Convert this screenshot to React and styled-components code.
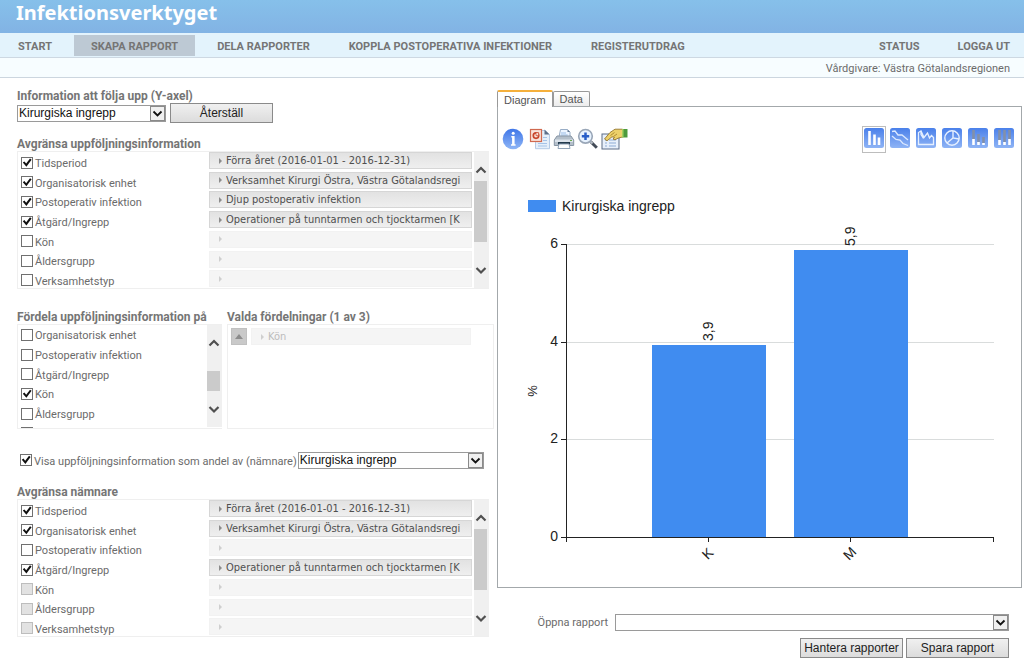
// src/App.jsx
import React, { useState } from "react";
import styled, { createGlobalStyle } from "styled-components";

const dimensions = [
  "Tidsperiod",
  "Organisatorisk enhet",
  "Postoperativ infektion",
  "Åtgärd/Ingrepp",
  "Kön",
  "Åldersgrupp",
  "Verksamhetstyp",
];

const period = "Förra året (2016-01-01 - 2016-12-31)";
const unit = "Verksamhet Kirurgi Östra, Västra Götalandsregi";
const surgery = "Operationer på tunntarmen och tjocktarmen [K";

const followUpValues = [period, unit, "Djup postoperativ infektion", surgery, "", "", ""];
const denominatorValues = [period, unit, "", surgery, "", "", ""];

const bars = [
  { name: "K", value: 3.93, label: "3,9" },
  { name: "M", value: 5.88, label: "5,9" },
];

function Select({ id, label, options }) {
  return (
    <SelectBox>
      <select id={id} aria-label={label}>
        {options.map((option) => (
          <option key={option}>{option}</option>
        ))}
      </select>
      <SelectArrow viewBox="0 0 15 15" aria-hidden="true">
        <rect x="0.5" y="0.5" width="14" height="14" fill="#f0f0f0" stroke="#8a8a8a" />
        <path d="M3.5 5.5 L7.5 9.5 L11.5 5.5" fill="none" stroke="#111" strokeWidth="1.8" />
      </SelectArrow>
    </SelectBox>
  );
}

function Check({ id, label, checked, disabled }) {
  return (
    <CheckRow>
      <Checkbox id={id} type="checkbox" defaultChecked={checked} disabled={disabled} />
      <label htmlFor={id}>{label}</label>
    </CheckRow>
  );
}

function Scroll({ offset, size }) {
  return (
    <ScrollBar aria-hidden="true">
      <svg viewBox="0 0 15 20">
        <path d="M2.5 12.5 L7 8 L11.5 12.5" />
      </svg>
      <ScrollTrack>
        <ScrollThumb style={{ marginTop: offset, height: size }} />
      </ScrollTrack>
      <svg viewBox="0 0 15 20">
        <path d="M2.5 8 L7 12.5 L11.5 8" />
      </svg>
    </ScrollBar>
  );
}

function Filter({ name, checked, disabled = [], values }) {
  return (
    <FilterPanel>
      <CheckList $height={138}>
        {dimensions.map((dimension, i) => (
          <Check
            key={dimension}
            id={`${name}-${i}`}
            label={dimension}
            checked={checked.includes(i)}
            disabled={disabled.includes(i)}
          />
        ))}
      </CheckList>
      <ValueList>
        {values.map((value, i) => (
          <li key={i}>
            <ValueButton disabled={!value} aria-label={value || dimensions[i]}>
              <Caret />
              <span>{value}</span>
            </ValueButton>
          </li>
        ))}
      </ValueList>
      <Scroll offset={1} size={61} />
    </FilterPanel>
  );
}

function InfoIcon() {
  return (
    <svg width="22" height="22" viewBox="0 0 22 22">
      <defs>
        <linearGradient id="info" x1="0" y1="0" x2="0" y2="1">
          <stop offset="0" stopColor="#3f76e8" />
          <stop offset="1" stopColor="#8fb6f6" />
        </linearGradient>
      </defs>
      <circle cx="11" cy="11" r="10.3" fill="url(#info)" />
      <circle cx="11.2" cy="5.2" r="1.5" fill="#fff" />
      <path d="M9.3 8.7h2.2v8M9 17h4.6" fill="none" stroke="#fff" strokeWidth="1.4" />
      <path d="M11.3 8v9" stroke="#fff" strokeWidth="2.4" />
    </svg>
  );
}

function PresentationIcon() {
  return (
    <svg width="22" height="22" viewBox="0 0 22 22">
      <path d="M6.5 2.5H16l4.5 4v14.2h-14z" fill="#e5effa" stroke="#b4cae6" />
      <path d="M15.5 1.5v5h5z" fill="#5d6f88" />
      <path d="M9 15.5h9M9 18h9M14 9.5h4M14 12.5h4" stroke="#a5c3e8" />
      <rect x="1.5" y="1.5" width="11" height="12" fill="#f9e3da" stroke="#d0694f" strokeWidth="1.2" />
      <circle cx="7" cy="7.6" r="2.7" fill="none" stroke="#c8452a" strokeWidth="1.7" />
      <path d="M7 7.6v-3h2.6v3z" fill="#f9e3da" stroke="#c8452a" strokeWidth="0.7" />
    </svg>
  );
}

function PrintIcon() {
  return (
    <svg width="22" height="22" viewBox="0 0 22 22">
      <path d="M6 9 7.5 1.5h7L17 4v5z" fill="#edf5ff" stroke="#98adc6" />
      <path d="M14.5 1.5V4H17z" fill="#647990" />
      <path d="M8 5h5M7.7 7h7" stroke="#9bbde6" />
      <path d="M4 8h14l2.7 4v5.5H1.3V12z" fill="#b4bfca" stroke="#8795a4" />
      <path d="M2 11.5h18V14H2z" fill="#dce3eb" />
      <path d="M5 14h12v2.8H5z" fill="#243b4d" />
      <path d="M6 16h10l1 4.5H5z" fill="#fff" stroke="#91a3b7" />
      <rect x="17" y="12" width="2" height="1" fill="#6aaa4b" />
    </svg>
  );
}

function ZoomIcon() {
  return (
    <svg width="22" height="22" viewBox="0 0 22 22">
      <path d="m13.5 13.5 6.3 6.3" stroke="#444c58" strokeWidth="3" />
      <path d="m13 13 2.5 2.5" stroke="#b6bdc6" strokeWidth="2" />
      <circle cx="8.5" cy="8.3" r="6.8" fill="#e7f2fe" stroke="#99a6b7" strokeWidth="1.6" />
      <path d="M8.5 4.6V12M4.8 8.3h7.4" stroke="#285ec8" strokeWidth="2.5" />
    </svg>
  );
}

function PropertiesIcon() {
  return (
    <svg width="27" height="22" viewBox="0 0 27 22">
      <rect x="1" y="6" width="17" height="15" fill="#e8f0fb" stroke="#5c6c86" />
      <path d="M4 12h2M8 12h7M4 15h2M8 15h7M4 18h2M8 18h7" stroke="#8dabd4" />
      <path
        d="M3.5 11 9 4.5l5-3.3h7.5V9L17 10.2l-3 1.6-2-.8 1.5-1.6-2.5-.6-5 4z"
        fill="#ecd06a"
        stroke="#8a6a20"
        strokeWidth="0.8"
      />
      <path d="m9.5 7.5 4-3M12.5 8.5 16 6" stroke="#a07c26" strokeWidth="0.8" />
      <path d="M21 1h5.5v8.5H21z" fill="#4c9a3d" />
      <path d="M21 1h1.5v8.5H21z" fill="#a5cf5f" />
    </svg>
  );
}

const chartGlyphs = {
  Stapeldiagram: <path d="M5.5 3v14M10.5 6.5V17M15 9.5V17" stroke="#fff" strokeWidth="2.6" />,
  Linjediagram: (
    <path
      d="M2 3.5 5 3l3 4h4l6 5M2 8l4 3.5 4 .5 3 3.5 5 2"
      fill="none"
      stroke="#dce9ff"
      strokeWidth="1.3"
    />
  ),
  Ytdiagram: (
    <path
      d="M2.5 16.5v-12L5 3l3 6.5L11.5 5l2 5 2-2.5 2 2v7zM5 3v3.5l2.5 4"
      fill="none"
      stroke="#e6f0ff"
      strokeWidth="1.3"
    />
  ),
  Cirkeldiagram: (
    <>
      <circle cx="10" cy="10" r="7.2" fill="none" stroke="#e6f0ff" strokeWidth="1.4" />
      <path d="M11 3v7l6 1M11 10l-6 5" fill="none" stroke="#e6f0ff" strokeWidth="1.4" />
    </>
  ),
  "Staplat diagram": (
    <>
      <path d="M5.5 2v9M10.5 6v8M15.5 9v6" stroke="#8290a9" strokeWidth="2.6" />
      <path d="M5.5 11v6M10.5 14v3M15.5 15v2" stroke="#fff" strokeWidth="2.6" />
    </>
  ),
  "Procentstaplat diagram": (
    <>
      <path d="M5.5 2v10M10.5 2v12M15.5 2v9" stroke="#8290a9" strokeWidth="2.6" />
      <path d="M5.5 12v5M10.5 14v3M15.5 11v6" stroke="#fff" strokeWidth="2.6" />
    </>
  ),
};

function ChartIcon({ name }) {
  return (
    <svg width="20" height="20" viewBox="0 0 20 20">
      <defs>
        <linearGradient id="chart-type" x1="0" y1="0" x2="0" y2="1">
          <stop offset="0" stopColor="#4a80ea" />
          <stop offset="1" stopColor="#8fb4f5" />
        </linearGradient>
      </defs>
      <rect width="20" height="20" rx="2.5" fill="url(#chart-type)" />
      {chartGlyphs[name]}
    </svg>
  );
}

function BarChart() {
  const left = 68;
  const right = 496;
  const top = 28;
  const bottom = 321;
  const y = (value) => bottom - Math.round((value * (bottom - top)) / 6);
  const step = (right - left) / 3;

  return (
    <Chart viewBox="0 0 523 371" role="img" aria-label="Kirurgiska ingrepp">
      {[0, 2, 4, 6].map((tick) => (
        <g key={tick}>
          <line className="grid" x1={left} x2={right} y1={y(tick) + 0.5} y2={y(tick) + 0.5} />
          <line className="axis" x1={left - 5} x2={left} y1={y(tick) + 0.5} y2={y(tick) + 0.5} />
          <text x={left - 8} y={y(tick) + 4} textAnchor="end">{tick}</text>
        </g>
      ))}
      {bars.map((bar, i) => {
        const x = Math.round(left + step * (i + 1));
        return (
          <g key={bar.name}>
            <rect x={x - 57} y={y(bar.value)} width="114" height={bottom - y(bar.value)} fill="#408cf0" />
            <text transform={`translate(${x + 4} ${y(bar.value) - 4}) rotate(-90)`}>{bar.label}</text>
            <text transform={`translate(${x + 2} ${bottom + 20}) rotate(-45)`} textAnchor="middle">
              {bar.name}
            </text>
          </g>
        );
      })}
      <line className="axis" x1={left + 0.5} x2={left + 0.5} y1={top} y2={bottom + 5} />
      <line className="axis" x1={left} x2={right} y1={bottom + 0.5} y2={bottom + 0.5} />
      {[1, 2, 3].map((n) => {
        const x = Math.round(left + step * n) - 0.5;
        return <line key={n} className="axis" x1={x} x2={x} y1={bottom} y2={bottom + 5} />;
      })}
      <text className="unit" transform="translate(39 175) rotate(-90)" textAnchor="middle">%</text>
    </Chart>
  );
}

function App() {
  const [chartType, setChartType] = useState("Stapeldiagram");

  return (
    <>
      <GlobalStyle />
      <Header>
        <h1>Infektionsverktyget</h1>
      </Header>
      <Nav>
        <NavGroup>
          <NavLink href="#start">START</NavLink>
          <NavLink href="#skapa" $active>SKAPA RAPPORT</NavLink>
          <NavLink href="#dela">DELA RAPPORTER</NavLink>
          <NavLink href="#koppla">KOPPLA POSTOPERATIVA INFEKTIONER</NavLink>
          <NavLink href="#register">REGISTERUTDRAG</NavLink>
        </NavGroup>
        <AccountGroup>
          <NavLink href="#status">STATUS</NavLink>
          <NavLink href="#logout">LOGGA UT</NavLink>
        </AccountGroup>
      </Nav>
      <CareGiver>Vårdgivare: Västra Götalandsregionen</CareGiver>

      <Main>
        <section>
          <Heading as="label" htmlFor="measure">Information att följa upp (Y-axel)</Heading>
          <MeasureRow>
            <Select id="measure" options={["Kirurgiska ingrepp"]} />
            <Button>Återställ</Button>
          </MeasureRow>

          <Heading>Avgränsa uppföljningsinformation</Heading>
          <Filter name="followup" checked={[0, 1, 2, 3]} values={followUpValues} />

          <SplitRow>
            <div>
              <Heading>Fördela uppföljningsinformation på</Heading>
              <SplitPanel>
                <CheckList $height={118}>
                  {dimensions.slice(1).map((dimension, i) => (
                    <Check key={dimension} id={`split-${i}`} label={dimension} checked={i === 3} />
                  ))}
                </CheckList>
                <Scroll offset={18} size={20} />
              </SplitPanel>
            </div>
            <div>
              <Heading>Valda fördelningar (1 av 3)</Heading>
              <ChosenPanel>
                <MoveButton disabled aria-label="Flytta upp">
                  <svg width="8" height="5" viewBox="0 0 8 5">
                    <path d="M0 5 4 0l4 5z" fill="#8c8c8c" />
                  </svg>
                </MoveButton>
                <ValueButton disabled>
                  <Caret />
                  <span>Kön</span>
                </ValueButton>
              </ChosenPanel>
            </div>
          </SplitRow>

          <DenominatorRow>
            <Check id="denominator" label="Visa uppföljningsinformation som andel av (nämnare)" checked />
            <Select label="Nämnare" options={["Kirurgiska ingrepp"]} />
          </DenominatorRow>

          <Heading>Avgränsa nämnare</Heading>
          <Filter
            name="denominator"
            checked={[0, 1, 3]}
            disabled={[4, 5, 6]}
            values={denominatorValues}
          />
        </section>

        <Report>
          <Tabs role="tablist">
            <Tab role="tab" aria-selected="true" $active>Diagram</Tab>
            <Tab role="tab" aria-selected="false">Data</Tab>
          </Tabs>
          <ReportPanel>
            <Toolbar>
              <Tools>
                <IconButton aria-label="Information"><InfoIcon /></IconButton>
                <IconButton aria-label="Exportera"><PresentationIcon /></IconButton>
                <IconButton aria-label="Skriv ut"><PrintIcon /></IconButton>
                <IconButton aria-label="Förstora"><ZoomIcon /></IconButton>
                <IconButton aria-label="Egenskaper"><PropertiesIcon /></IconButton>
              </Tools>
              <ChartTypes>
                {Object.keys(chartGlyphs).map((name) => (
                  <ChartTypeButton
                    key={name}
                    aria-label={name}
                    $active={name === chartType}
                    onClick={() => setChartType(name)}
                  >
                    <ChartIcon name={name} />
                  </ChartTypeButton>
                ))}
              </ChartTypes>
            </Toolbar>
            <Legend>Kirurgiska ingrepp</Legend>
            <BarChart />
          </ReportPanel>
          <OpenRow>
            <label htmlFor="report">Öppna rapport</label>
            <Select id="report" options={[""]} />
          </OpenRow>
          <Actions>
            <Button>Hantera rapporter</Button>
            <Button>Spara rapport</Button>
          </Actions>
        </Report>
      </Main>
    </>
  );
}

export default App;

const GlobalStyle = createGlobalStyle`
  * {
    box-sizing: border-box;
  }

  body {
    margin: 0;
    background: #fff;
    color: #6b6b6b;
    font: 11px/16px Roboto, "Open Sans", sans-serif;
  }

  ul {
    margin: 0;
    padding: 0;
    list-style: none;
  }

  button, select {
    font: 12px/16px "Liberation Sans", Arial, sans-serif;
  }
`;

// Header and navigation
const Header = styled.header`
  height: 33px;
  padding: 0 16px;
  background: linear-gradient(#86c0ea, #82b3e4);

  h1 {
    margin: 0;
    color: #fff;
    font-family: "Noto Sans", sans-serif;
    font-size: 20px;
    line-height: 26px;
  }
`;

const Nav = styled.nav`
  display: flex;
  justify-content: space-between;
  height: 25px;
  padding: 2px 14px 1px 1px;
  background: #e3f3fc;
  border-bottom: 1px solid #cdd8e2;
`;

const NavGroup = styled.div`
  display: flex;
  gap: 5px;
`;

const NavLink = styled.a`
  padding: 0 17px;
  background: ${(props) => (props.$active ? "#bdc9d4" : "transparent")};
  color: #757575;
  font-size: 11px;
  font-weight: bold;
  line-height: 23px;
  text-decoration: none;
  white-space: nowrap;
`;

const AccountGroup = styled(NavGroup)`
  gap: 38px;

  ${NavLink} {
    padding: 0;
  }
`;

const CareGiver = styled.div`
  height: 20px;
  padding-right: 14px;
  background: #f7fdff;
  border-bottom: 1px solid #ccd6df;
  line-height: 21px;
  text-align: right;
`;

const Main = styled.main`
  display: grid;
  grid-template-columns: minmax(0, 477fr) minmax(0, 525fr);
  gap: 3px;
  padding: 10px 2px 0 17px;
`;

const Heading = styled.h2`
  display: block;
  margin: 0;
  padding-top: 1px;
  color: #757575;
  font-size: 12px;
  font-weight: bold;
  line-height: 14px;
  white-space: nowrap;
`;

// Form controls
const Button = styled.button`
  width: 103px;
  height: 20px;
  padding: 0;
  background: linear-gradient(#f0f0f0, #dcdcdc);
  border: 1px solid #8a8a8a;
  color: #222;
  white-space: nowrap;
`;

const SelectBox = styled.span`
  position: relative;
  display: block;
  height: 17px;

  select {
    display: block;
    width: 100%;
    height: 100%;
    padding: 0 18px 0 1px;
    appearance: none;
    background: #fff;
    border: 1px solid #9a9a9a;
    border-radius: 0;
    color: #111;
    line-height: 15px;
  }
`;

const SelectArrow = styled.svg`
  position: absolute;
  top: 1px;
  right: 1px;
  width: 15px;
  height: 15px;
  pointer-events: none;
`;

const MeasureRow = styled.div`
  display: flex;
  align-items: center;
  gap: 4px;
  margin-bottom: 13px;

  ${SelectBox} {
    width: 149px;
  }
`;

const CheckRow = styled.div`
  display: flex;
  flex: 1;
  align-items: center;
  gap: 2px;
  white-space: nowrap;

  label {
    padding-top: 3px;
  }
`;

const Checkbox = styled.input`
  flex: none;
  width: 12px;
  height: 12px;
  margin: 0;
  appearance: none;
  background: #fff;
  border: 1px solid #707070;

  &:checked::before {
    content: "";
    display: block;
    width: 10px;
    height: 10px;
    background: #111;
    clip-path: polygon(8% 48%, 24% 36%, 42% 58%, 80% 8%, 96% 20%, 44% 90%);
  }

  &:disabled {
    background: #e2e2e2;
    border-color: #bdbdbd;
  }
`;

const CheckList = styled.div`
  display: flex;
  flex-direction: column;
  height: ${(props) => props.$height}px;
  padding-left: 3px;
`;

const ScrollBar = styled.div`
  display: flex;
  flex-direction: column;
  width: 15px;
  padding: 8px 0;
  background: #f0f0f0;

  svg {
    flex: none;
    width: 15px;
    height: 20px;
    fill: none;
    stroke: #505050;
    stroke-width: 2.2;
  }
`;

const ScrollTrack = styled.div`
  flex: 1;
`;

const ScrollThumb = styled.div`
  width: 13px;
  background: #cbcbcb;
`;

const FilterPanel = styled.div`
  display: grid;
  grid-template-columns: 191px minmax(0, 1fr) 15px;
  height: 138px;
  margin-right: 5px;
  border: 1px solid #efefef;
  border-right: 0;

  ${CheckList} {
    padding-top: 1px;
  }

  ${ScrollBar} {
    height: 136px;
  }
`;

const ValueList = styled.ul`
  display: flex;
  flex-direction: column;
  padding-right: 2px;

  li {
    flex: 1;
  }
`;

const ValueButton = styled.button`
  display: flex;
  align-items: center;
  width: 100%;
  height: 17px;
  padding: 0 4px 0 9px;
  background: linear-gradient(#e2e2e2, #efefef);
  border: 1px solid #d6d6d6;
  color: #4f4f4f;
  font-family: "DejaVu Sans Condensed", "DejaVu Sans", sans-serif;
  font-size: 11px;
  line-height: 15px;

  span {
    overflow: hidden;
    white-space: nowrap;
  }

  &:disabled {
    background: #f5f5f5;
    border-color: #f2f2f2;
    color: #bcbcbc;
  }
`;

const Caret = styled.i`
  flex: none;
  margin-right: 4px;
  border: 3px solid transparent;
  border-left-color: #8c8c8c;
  border-right: 0;

  button:disabled & {
    border-left-color: #cfcfcf;
  }
`;

// Distribution
const SplitRow = styled.div`
  display: grid;
  grid-template-columns: minmax(0, 205fr) minmax(0, 267fr);
  gap: 5px;
  margin: 20px 0 22px;
`;

const SplitPanel = styled.div`
  display: flex;
  justify-content: space-between;
  height: 105px;
  overflow: hidden;
  border: 1px solid #efefef;
  border-right: 0;

  ${ScrollBar} {
    height: 102px;
  }
`;

const ChosenPanel = styled.div`
  display: flex;
  align-items: flex-start;
  gap: 4px;
  height: 105px;
  padding: 3px 22px 0 3px;
  border: 1px solid #efefef;
`;

const MoveButton = styled.button`
  display: flex;
  flex: none;
  align-items: center;
  justify-content: center;
  width: 16px;
  height: 17px;
  padding: 0;
  background: #c9c9c9;
  border: 1px solid #c0c0c0;
`;

const DenominatorRow = styled.div`
  display: flex;
  align-items: center;
  gap: 1px;
  height: 18px;
  margin-bottom: 15px;
  padding: 0 10px 0 3px;

  ${CheckRow} {
    flex: none;
  }

  ${SelectBox} {
    flex: 1;
  }
`;

// Report
const Report = styled.section`
  padding-top: 2px;
`;

const Tabs = styled.div`
  display: flex;
  align-items: flex-end;
  height: 16px;
`;

const Tab = styled.button`
  position: relative;
  height: ${(props) => (props.$active ? "17px" : "15px")};
  margin-bottom: ${(props) => (props.$active ? "-1px" : "0")};
  padding: 0 6px;
  background: ${(props) => (props.$active ? "#fff" : "linear-gradient(#fff, #ececec)")};
  border: 1px solid #999;
  border-top: ${(props) => (props.$active ? "2px solid #f5b03c" : "1px solid #999")};
  border-bottom: 0;
  border-radius: 2px 2px 0 0;
  color: #555;
  font-size: 11px;
  line-height: 12px;
`;

const ReportPanel = styled.div`
  padding-top: 19px;
  border: 1px solid #a3a8ab;
`;

const Toolbar = styled.div`
  display: flex;
  justify-content: space-between;
  height: 27px;
  padding: 0 5px 0 4px;
`;

const Tools = styled.div`
  display: flex;
  align-items: flex-start;
  gap: 2px;
  padding-top: 2px;

  & > :first-child {
    margin-right: 3px;
  }
`;

const IconButton = styled.button`
  display: flex;
  padding: 0;
  background: none;
  border: 0;
`;

const ChartTypes = styled.div`
  display: flex;
  gap: 2px;
`;

const ChartTypeButton = styled(IconButton)`
  justify-content: center;
  width: 24px;
  height: 27px;
  padding: 1px;
  border: 1px solid ${(props) => (props.$active ? "#bdbdbd" : "transparent")};
`;

const Legend = styled.div`
  display: flex;
  align-items: center;
  gap: 6px;
  margin-top: 43px;
  padding-left: 30px;
  color: #222;
  font: 14px/20px "Liberation Sans", Arial, sans-serif;

  &::before {
    content: "";
    width: 28px;
    height: 12px;
    background: #408cf0;
  }
`;

const Chart = styled.svg`
  display: block;
  width: 100%;

  text {
    fill: #222;
    font: 14px "Liberation Sans", Arial, sans-serif;
  }

  .unit {
    font-size: 13px;
  }

  .grid {
    stroke: #d9dcdc;
  }

  .axis {
    stroke: #222;
  }
`;

const OpenRow = styled.div`
  display: flex;
  align-items: center;
  justify-content: flex-end;
  gap: 7px;
  margin: 26px 13px 7px 0;

  ${SelectBox} {
    width: 394px;
  }
`;

const Actions = styled.div`
  display: flex;
  justify-content: flex-end;
  gap: 3px;
  margin-right: 13px;
`;
